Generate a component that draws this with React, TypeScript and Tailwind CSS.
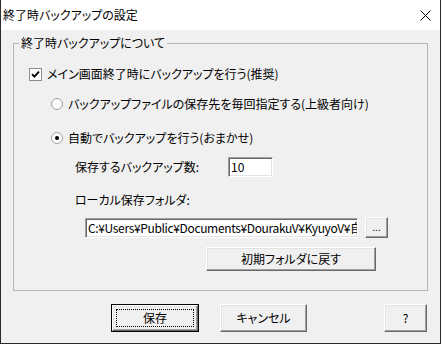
import React from 'react';

const font = "font-['Noto_Sans_CJK_JP','Noto_Sans',sans-serif] [font-feature-settings:'palt']";

// classic raised 3D button
const Btn = ({ children, className = '', isDefault = false }: { children: React.ReactNode; className?: string; isDefault?: boolean }) => {
  if (isDefault) {
    return (
      <div className={`border border-black bg-[#f0f0f0] ${className}`}>
        <div className="w-full h-full border border-t-white border-l-white border-b-[#696969] border-r-[#696969] shadow-[inset_-1px_-1px_#a0a0a0,inset_1px_1px_#e3e3e3] p-[3px]">
          <div className="w-full h-full border border-dotted border-black flex items-center justify-center text-[12px] leading-none text-black">
            {children}
          </div>
        </div>
      </div>
    );
  }
  return (
    <div
      className={`bg-[#f0f0f0] border border-t-white border-l-white border-b-[#696969] border-r-[#696969] shadow-[inset_-1px_-1px_#a0a0a0,inset_1px_1px_#e3e3e3] flex items-center justify-center text-[12px] leading-none text-black ${className}`}
    >
      {children}
    </div>
  );
};

// sunken edit box
const Edit = ({ value, className = '' }: { value: string; className?: string }) => (
  <div className={`bg-white border border-t-[#a0a0a0] border-l-[#a0a0a0] border-b-white border-r-white shadow-[inset_1px_1px_#696969,inset_-1px_-1px_#e3e3e3] overflow-hidden flex items-center pl-[2px] text-[12px] leading-[16px] text-black whitespace-nowrap ${className}`}>
    {value}
  </div>
);

const Radio = ({ checked }: { checked?: boolean }) => (
  <div className="w-[12px] h-[12px] rounded-full bg-white border border-[#a0a0a0] flex items-center justify-center shrink-0">
    {checked && <div className="w-[4px] h-[4px] rounded-full bg-black" />}
  </div>
);

export default function App() {
  return (
    <div className={`w-[441px] h-[344px] bg-[#f0f0f0] border-x border-b border-[#2b2b2b] flex flex-col text-black ${font}`}>
      {/* title bar */}
      <div className="h-[30px] bg-white flex items-center justify-between pl-[2px] pr-[9px] shrink-0">
        <span className="text-[12px] leading-none">終了時バックアップの設定</span>
        <svg width="11" height="11" viewBox="0 0 11 11" className="mt-[1px]">
          <path d="M0.5 0.5 L10.5 10.5 M10.5 0.5 L0.5 10.5" stroke="#000" strokeWidth="1" />
        </svg>
      </div>

      <fieldset className="mx-[12px] mt-[7px] h-[254px] border border-[#b5b5b5] px-0 pb-0 shrink-0">
        <legend className="ml-[5px] px-[2px] text-[12px] leading-[12px] h-[12px]">終了時バックアップについて</legend>

        <div className="flex flex-col">
          <div className="mt-[18px] h-[14px] flex items-center pl-[15px] gap-[5px]">
            <div className="w-[13px] h-[13px] bg-white border border-[#8c8c8c] flex items-center justify-center shrink-0">
              <svg width="9" height="9" viewBox="0 0 9 9">
                <path d="M1 4.2 L3.4 6.6 L8 1.6" stroke="#000" strokeWidth="1.8" fill="none" />
              </svg>
            </div>
            <span className="text-[12px] leading-none">メイン画面終了時にバックアップを行う(推奨)</span>
          </div>

          <div className="mt-[16px] h-[14px] flex items-center pl-[37px] gap-[5px]">
            <Radio />
            <span className="text-[12px] leading-none">バックアップファイルの保存先を毎回指定する(上級者向け)</span>
          </div>

          <div className="mt-[20px] h-[14px] flex items-center pl-[37px] gap-[5px]">
            <Radio checked />
            <span className="text-[12px] leading-none">自動でバックアップを行う(おまかせ)</span>
          </div>

          <div className="mt-[12px] h-[20px] flex items-center pl-[61px]">
            <span className="text-[12px] leading-none w-[153px]">保存するバックアップ数:</span>
            <Edit value="10" className="w-[45px] h-[20px]" />
          </div>

          <div className="mt-[16px] h-[14px] flex items-center pl-[61px]">
            <span className="text-[12px] leading-none">ローカル保存フォルダ:</span>
          </div>

          <div className="mt-[10px] h-[21px] flex items-center pl-[71px] gap-[7px]">
            <Edit value="C:¥Users¥Public¥Documents¥DourakuV¥KyuyoV¥自" className="w-[273px] h-[20px] tracking-[-0.35px]" />
            <Btn className="w-[23px] h-[21px]">
              <span className="text-[10px] -mt-[2px]">...</span>
            </Btn>
          </div>

          <div className="mt-[9px] flex pl-[192px]">
            <Btn className="w-[170px] h-[24px]">初期フォルダに戻す</Btn>
          </div>
        </div>
      </fieldset>

      <div className="mt-[13px] flex pl-[110px]">
        <Btn isDefault className="w-[88px] h-[28px]">保存</Btn>
        <Btn className="w-[87px] h-[28px] ml-[21px]">キャンセル</Btn>
        <Btn className="w-[43px] h-[28px] ml-[77px]">?</Btn>
      </div>
    </div>
  );
}
